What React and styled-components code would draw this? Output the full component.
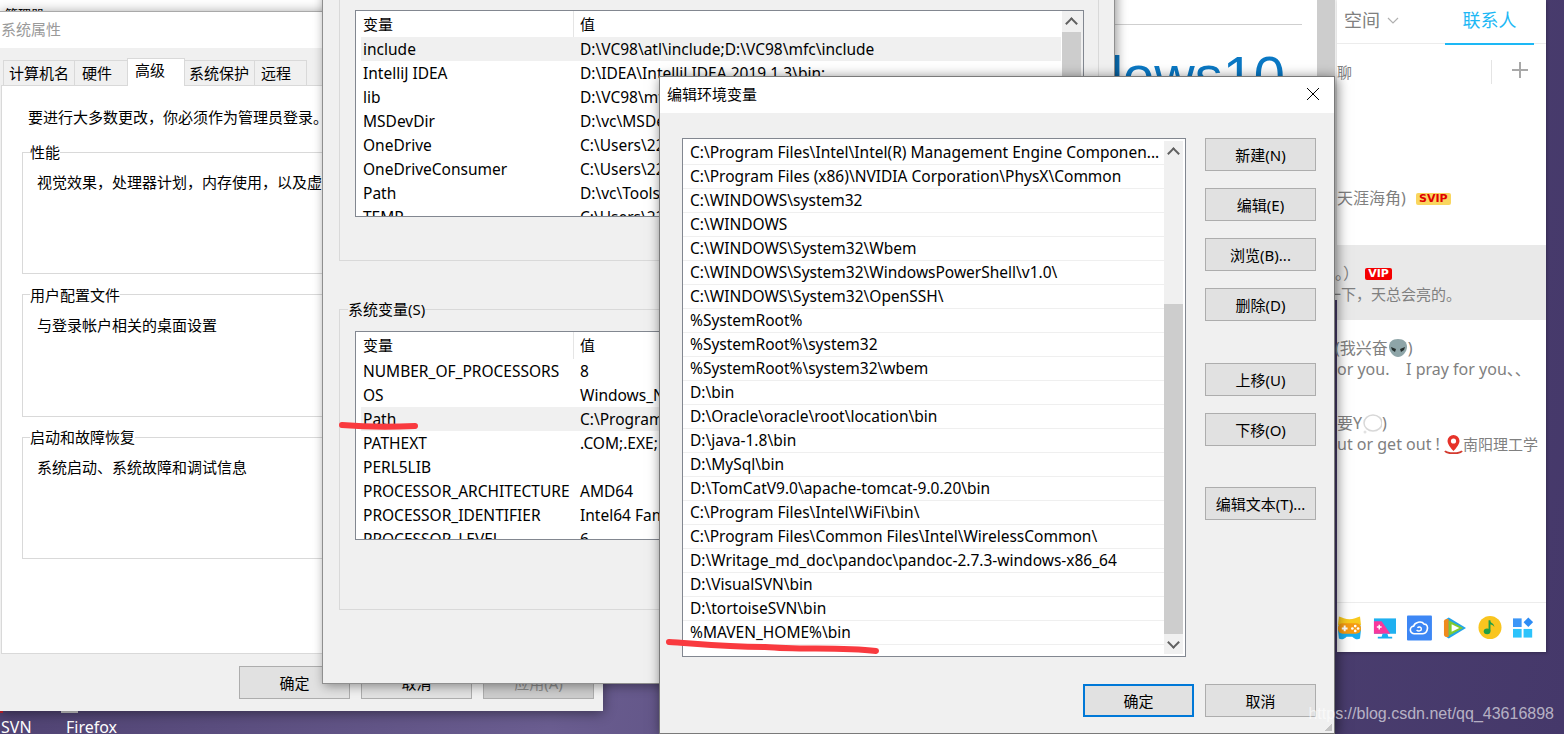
import React from "react";
import styled, { createGlobalStyle } from "styled-components";

const uiFont = `"Noto Sans", "Noto Sans CJK SC", sans-serif`;

const pathRows = [
  "C:\\Program Files\\Intel\\Intel(R) Management Engine Componen...",
  "C:\\Program Files (x86)\\NVIDIA Corporation\\PhysX\\Common",
  "C:\\WINDOWS\\system32",
  "C:\\WINDOWS",
  "C:\\WINDOWS\\System32\\Wbem",
  "C:\\WINDOWS\\System32\\WindowsPowerShell\\v1.0\\",
  "C:\\WINDOWS\\System32\\OpenSSH\\",
  "%SystemRoot%",
  "%SystemRoot%\\system32",
  "%SystemRoot%\\system32\\wbem",
  "D:\\bin",
  "D:\\Oracle\\oracle\\root\\location\\bin",
  "D:\\java-1.8\\bin",
  "D:\\MySql\\bin",
  "D:\\TomCatV9.0\\apache-tomcat-9.0.20\\bin",
  "C:\\Program Files\\Intel\\WiFi\\bin\\",
  "C:\\Program Files\\Common Files\\Intel\\WirelessCommon\\",
  "D:\\Writage_md_doc\\pandoc\\pandoc-2.7.3-windows-x86_64",
  "D:\\VisualSVN\\bin",
  "D:\\tortoiseSVN\\bin",
  "%MAVEN_HOME%\\bin",
  "",
];

const userVars = [
  ["include", "D:\\VC98\\atl\\include;D:\\VC98\\mfc\\include", true],
  ["IntelliJ IDEA", "D:\\IDEA\\IntelliJ IDEA 2019.1.3\\bin;"],
  ["lib", "D:\\VC98\\mfc\\lib"],
  ["MSDevDir", "D:\\vc\\MSDev98"],
  ["OneDrive", "C:\\Users\\22"],
  ["OneDriveConsumer", "C:\\Users\\22"],
  ["Path", "D:\\vc\\Tools"],
  ["TEMP", "C:\\Users\\22"],
];

const sysVars = [
  ["NUMBER_OF_PROCESSORS", "8"],
  ["OS", "Windows_NT"],
  ["Path", "C:\\Program Files", true],
  ["PATHEXT", ".COM;.EXE;"],
  ["PERL5LIB", ""],
  ["PROCESSOR_ARCHITECTURE", "AMD64"],
  ["PROCESSOR_IDENTIFIER", "Intel64 Family"],
  ["PROCESSOR_LEVEL", "6"],
];

const sideButtons = [
  ["新建(N)", 0],
  ["编辑(E)", 17],
  ["浏览(B)...", 17],
  ["删除(D)", 17],
  ["上移(U)", 42],
  ["下移(O)", 17],
  ["编辑文本(T)...", 41],
];

export default function App() {
  return (
    <Desktop>
      <GlobalStyle />

      <BackWindow>
        <ClippedTitle>管理器</ClippedTitle>
        <BackRule />
        <BackHeading>Windows10</BackHeading>
        <BackScroll />
      </BackWindow>

      <DesktopStub $left={61} $color="#cfcfcf" />
      <DesktopStub $left={0} $color="#c8202a" />
      <DesktopLabel $left={1}>SVN</DesktopLabel>
      <DesktopLabel $left={66}>Firefox</DesktopLabel>

      <QQPanel>
        <QQTabs>
          <QQTab>空间<Caret viewBox="0 0 12 8"><path d="M1 1l5 5 5-5" /></Caret></QQTab>
          <QQTab $active>联系人</QQTab>
        </QQTabs>
        <QQSearch>
          <span>聊</span>
          <QQAdd>
            <svg width="18" height="18" viewBox="0 0 18 18"><path d="M9 1v16M1 9h16" stroke="#a8a8a8" strokeWidth="2" /></svg>
          </QQAdd>
        </QQSearch>
        <QQList>
          <QQRow $top={70}>
            <QQName>天涯海角) <Badge $gold>SVIP</Badge></QQName>
          </QQRow>
          <QQRow $active>
            <QQName $shift={-2}>。） <Badge>VIP</Badge></QQName>
            <QQSub $shift={-11}><SubCjk>一下，天总会亮的。</SubCjk></QQSub>
          </QQRow>
          <QQRow>
            <QQName $shift={-2}>(我兴奋<Alien />)</QQName>
            <QQSub>or you. &nbsp;&nbsp; I pray for you、、</QQSub>
          </QQRow>
          <QQRow>
            <QQName>要Y<Bubble />)</QQName>
            <QQSub>ut or get out ! <Pin /><SubCjk>南阳理工学</SubCjk></QQSub>
          </QQRow>
        </QQList>
        <QQFooter>
          <AppIcons />
        </QQFooter>
      </QQPanel>

      <PropsWindow>
        <WinTitle $muted>系统属性</WinTitle>
        <TabBar>
          <TabItem $w={72} $pad={5}>计算机名</TabItem>
          <TabItem $w={54} $pad={7}>硬件</TabItem>
          <TabItem $w={58} $pad={7} $active>高级</TabItem>
          <TabItem $w={71} $pad={4}>系统保护</TabItem>
          <TabItem $w={53} $pad={6}>远程</TabItem>
        </TabBar>
        <TabPanel>
          <AdminNote>要进行大多数更改，你必须作为管理员登录。</AdminNote>
          <Group>
            <legend>性能</legend>
            <p>视觉效果，处理器计划，内存使用，以及虚拟内存</p>
          </Group>
          <Group>
            <legend>用户配置文件</legend>
            <p>与登录帐户相关的桌面设置</p>
          </Group>
          <Group>
            <legend>启动和故障恢复</legend>
            <p>系统启动、系统故障和调试信息</p>
          </Group>
        </TabPanel>
        <PropsFooter>
          <WinButton>确定</WinButton>
          <WinButton>取消</WinButton>
          <WinButton $disabled>应用(A)</WinButton>
        </PropsFooter>
      </PropsWindow>

      <EnvWindow>
        <UserGroup>
          <VarTable $h={207}>
            <VarHead $h={26}><span>变量</span><span>值</span></VarHead>
            {userVars.map(([k, v, on]) => (
              <VarRow key={k} $on={on}><span>{k}</span><span>{v}</span></VarRow>
            ))}
            <VarScroll>
              <ScrollThumb />
              <ArrowUp />
            </VarScroll>
          </VarTable>
        </UserGroup>
        <SysGroup>
          <legend>系统变量(S)</legend>
          <VarTable $h={209}>
            <VarHead $h={27}><span>变量</span><span>值</span></VarHead>
            {sysVars.map(([k, v, on]) => (
              <VarRow key={k} $on={on}><span>{k}</span><span>{v}</span></VarRow>
            ))}
          </VarTable>
        </SysGroup>
      </EnvWindow>

      <EditWindow>
        <WinTitle>
          编辑环境变量
          <CloseIcon viewBox="0 0 14 14"><path d="M1 1l12 12M13 1L1 13" /></CloseIcon>
        </WinTitle>
        <EditBody>
          <PathList>
            <PathRows>
              {pathRows.map((p, i) => <PathRow key={i}>{p}</PathRow>)}
            </PathRows>
            <ListScroll>
              <ArrowUp />
              <ListThumb />
              <ArrowDown />
            </ListScroll>
          </PathList>
          <SideColumn>
            {sideButtons.map(([label, gap]) => (
              <WinButton key={label} $mt={gap}>{label}</WinButton>
            ))}
          </SideColumn>
        </EditBody>
        <EditFooter>
          <WinButton $primary>确定</WinButton>
          <WinButton>取消</WinButton>
        </EditFooter>
        <Grip />
      </EditWindow>

      <Scribble viewBox="0 0 1564 734">
        <path d="M342 425C365 427 395 427 415 426" strokeWidth="6" />
        <path d="M669 642C690 643 720 647 765 647C800 650 840 647 876 651" strokeWidth="6" />
      </Scribble>

      <Watermark>https://blog.csdn.net/qq_43616898</Watermark>
    </Desktop>
  );
}

function Alien() {
  return (
    <svg width="20" height="20" viewBox="0 0 20 20" style={{ verticalAlign: -4 }}>
      <path d="M10 1C4 1 1 4 1 9c0 5 5 10 9 10s9-5 9-10c0-5-3-8-9-8z" fill="#8ea5a8" />
      <path d="M3 9l5 2-1 3-3-2zM17 9l-5 2 1 3 3-2z" fill="#26302f" />
    </svg>
  );
}

function Bubble() {
  return (
    <svg width="20" height="20" viewBox="0 0 20 20" style={{ verticalAlign: -5 }}>
      <ellipse cx="11" cy="9" rx="9" ry="8" fill="#fff" stroke="#d8d8d8" strokeWidth="1.5" />
      <circle cx="3" cy="18" r="1.5" fill="#e2e2e2" />
    </svg>
  );
}

function Pin() {
  return (
    <svg width="19" height="20" viewBox="0 0 19 20" style={{ verticalAlign: -4 }}>
      <path d="M1 17c2 3 15 3 17 0" fill="none" stroke="#d33a2f" strokeWidth="2" />
      <path d="M9.500 1a6 6 0 0 0-6 6c0 4 6 10 6 10s6-6 6-10a6 6 0 0 0-6-6z" fill="#e6332a" />
      <circle cx="9.500" cy="7" r="2.600" fill="#fff" />
    </svg>
  );
}

function AppIcons() {
  return (
    <>
      <svg width="26" height="26" viewBox="0 0 26 26">
        <path d="M2 8h22l1 7-1 9c-3 2-6 0-8-2h-6c-2 2-5 4-8 2l-1-9z" fill="#18aef0" />
        <path d="M2 1c3 1 7 3 11 3s8-2 11-3l1 9H1z" fill="#f8c91e" />
        <rect x="1" y="8" width="24" height="11" rx="5" fill="#f59a12" />
        <path d="M5 13.500h6M8 10.500v6" stroke="#fff" strokeWidth="2" />
        <circle cx="16" cy="13.500" r="1.400" fill="#fff" /><circle cx="19" cy="11" r="1.400" fill="#fff" /><circle cx="19" cy="16" r="1.400" fill="#fff" /><circle cx="22" cy="13.500" r="1.400" fill="#fff" />
      </svg>
      <svg width="24" height="24" viewBox="0 0 24 24">
        <rect x="1" y="2" width="23" height="16" fill="#1fb0f0" />
        <path d="M1 5h8l9 13H1z" fill="#f8389c" />
        <path d="M4 11h5M6.500 8.500v5" stroke="#fff" strokeWidth="1.500" />
        <path d="M10 18h5l1 3h4v2H5v-2h4z" fill="#18aef0" />
      </svg>
      <svg width="26" height="26" viewBox="0 0 26 26">
        <rect width="26" height="26" rx="1" fill="#3d87f5" />
        <path d="M8 19a4 4 0 0 1-1-8c1-4 8-6 11-2 3 0 4 3 3 6-1 3-3 4-5 4z" fill="none" stroke="#fff" strokeWidth="1.700" />
        <path d="M10 15c2 2 5 1 5-1s-3-3-4-1" fill="none" stroke="#fff" strokeWidth="1.500" />
      </svg>
      <svg width="25" height="24" viewBox="0 0 25 24">
        <path d="M3 3l3-2 18 11-18 11-3-2z" fill="#22a4e8" />
        <path d="M1 5c0-2 3-3 5-2v18c-2 1-5 0-5-2z" fill="#f08a1d" />
        <path d="M6 4l15 8L6 20z" fill="#7fca2f" />
        <path d="M9 8l8 4-8 4z" fill="#fff" />
      </svg>
      <svg width="25" height="25" viewBox="0 0 25 25">
        <circle cx="12.500" cy="12.500" r="12" fill="#f9c51f" />
        <path d="M12 5v11" stroke="#1e9e4a" strokeWidth="2" />
        <ellipse cx="9.500" cy="16.500" rx="3.500" ry="3" fill="#1e9e4a" />
        <path d="M12 5c1 3 5 3 5 7-1-2-3-3-5-3z" fill="#1e9e4a" />
      </svg>
      <svg width="21" height="21" viewBox="0 0 21 21">
        <rect x="0" y="1" width="9" height="9" fill="#3c96f7" />
        <path d="M16 0l5 5-5 5-5-5z" fill="#2d8cf5" />
        <rect x="0" y="12" width="9" height="9" fill="#2cc3fb" />
        <rect x="11" y="12" width="9" height="9" fill="#2cc3fb" />
      </svg>
    </>
  );
}

const GlobalStyle = createGlobalStyle`
  html, body { margin: 0; padding: 0; overflow: hidden; }
  body { font-family: ${uiFont}; font-size: 15px; color: #000; }
`;

const Desktop = styled.div`
  position: relative;
  width: 1564px;
  height: 734px;
  overflow: hidden;
  background: linear-gradient(100deg, #4a3d6c 0%, #6a5d90 40%, #4e4272 70%, #45386a 100%);
`;

const BackWindow = styled.div`
  position: absolute;
  left: 0;
  top: 0;
  width: 1337px;
  height: 300px;
  background: #fff;
  border-right: 2px solid #f0f0f0;
  box-sizing: border-box;
  overflow: hidden;
`;

const ClippedTitle = styled.div`
  position: absolute;
  left: 5px;
  top: 6px;
  font-size: 13px;
  line-height: 16px;
`;

const BackRule = styled.div`
  position: absolute;
  left: 1115px;
  top: 24px;
  width: 187px;
  height: 1px;
  background: #cfcfcf;
`;

const BackHeading = styled.div`
  position: absolute;
  right: 50px;
  top: 48px;
  font-family: "Liberation Sans", sans-serif;
  font-size: 56px;
  line-height: 56px;
  color: #0a78c4;
`;

const BackScroll = styled.div`
  position: absolute;
  left: 1317px;
  top: 0;
  width: 18px;
  height: 100%;
  background: #cdcdcd;
`;

const DesktopStub = styled.div`
  position: absolute;
  left: ${(p) => p.$left}px;
  top: 700px;
  width: ${(p) => (p.$left ? 17 : 3)}px;
  height: 13px;
  background: ${(p) => p.$color};
`;

const DesktopLabel = styled.div`
  position: absolute;
  left: ${(p) => p.$left}px;
  top: 717px;
  color: #fff;
  font-size: 16px;
  line-height: 20px;
`;

const QQPanel = styled.div`
  position: absolute;
  left: 1337px;
  top: 0;
  width: 209px;
  height: 652px;
  background: #fff;
  display: flex;
  flex-direction: column;
  box-shadow: 1px 1px 3px rgba(0, 0, 0, 0.25);
  z-index: 1;
`;

const QQTabs = styled.div`
  height: 44px;
  flex: none;
  box-sizing: border-box;
  border-bottom: 1px solid #ececec;
  display: flex;
  justify-content: space-between;
  padding: 0 12px 0 7px;
`;

const QQTab = styled.div`
  width: ${(p) => (p.$active ? "89px" : "auto")};
  text-align: center;
  font-size: 18px;
  line-height: 41px;
  height: 45px;
  box-sizing: border-box;
  white-space: nowrap;
  color: ${(p) => (p.$active ? "#1db8f5" : "#808080")};
  border-bottom: ${(p) => (p.$active ? "2px solid #1db8f5" : "none")};
`;

const Caret = styled.svg`
  width: 12px;
  height: 8px;
  margin-left: 7px;
  vertical-align: 2px;
  fill: none;
  stroke: #b0b0b0;
  stroke-width: 1.2;
`;

const QQSearch = styled.div`
  height: 56px;
  flex: none;
  padding: 16px 0 0 0;
  box-sizing: border-box;
  font-size: 15px;
  line-height: 24px;
  color: #808080;
  display: flex;
  justify-content: space-between;
`;

const QQAdd = styled.div`
  width: 55px;
  height: 24px;
  box-sizing: border-box;
  border-left: 1px solid #e4e4e4;
  padding: 1px 0 0 19px;
`;

const QQList = styled.div`
  flex: 1;
  display: flex;
  flex-direction: column;
`;

const QQRow = styled.div`
  margin-top: ${(p) => p.$top || 0}px;
  height: 75px;
  box-sizing: border-box;
  padding: 16px 0 0 0;
  background: ${(p) => (p.$active ? "#e9e9e9" : "transparent")};
  color: #808080;
  white-space: nowrap;
`;

const QQName = styled.div`
  height: 24px;
  line-height: 24px;
  font-size: 16px;
  margin-left: ${(p) => p.$shift || 0}px;
`;

const QQSub = styled.div`
  height: 20px;
  margin-top: -1px;
  line-height: 20px;
  font-size: 16px;
  margin-left: ${(p) => p.$shift || 0}px;
`;

const SubCjk = styled.span`
  font-size: 15px;
`;

const Badge = styled.span`
  display: inline-block;
  vertical-align: 2px;
  margin-left: ${(p) => (p.$gold ? 6 : 2)}px;
  padding: 0 3px;
  height: 12px;
  line-height: 12px;
  border-radius: 2px;
  font-family: "DejaVu Sans", sans-serif;
  font-size: 11px;
  font-weight: 700;
  background: ${(p) => (p.$gold ? "#f9d65f" : "#f40000")};
  color: ${(p) => (p.$gold ? "#e00000" : "#fff")};
`;

const QQFooter = styled.div`
  height: 50px;
  flex: none;
  box-sizing: border-box;
  border-top: 1px solid #ececec;
  display: flex;
  align-items: center;
  justify-content: flex-end;
  gap: 11px;
  padding-right: 13px;
`;

const PropsWindow = styled.div`
  position: absolute;
  left: 0;
  top: 11px;
  width: 603px;
  height: 700px;
  background: #f0f0f0;
  border-top: 1px solid #a9a9a9;
  box-sizing: border-box;
  display: flex;
  flex-direction: column;
  box-shadow: 0 2px 12px rgba(0, 0, 0, 0.45);
  z-index: 2;
`;

const WinTitle = styled.div`
  height: 36px;
  flex: none;
  background: #fff;
  display: flex;
  align-items: center;
  justify-content: space-between;
  padding: 0 14px 3px ${(p) => (p.$muted ? "1px" : "7px")};
  box-sizing: border-box;
  color: ${(p) => (p.$muted ? "#9a9a9a" : "#000")};
`;

const TabBar = styled.div`
  display: flex;
  align-items: flex-end;
  height: 37px;
  flex: none;
  padding-left: 4px;
`;

const TabItem = styled.div`
  width: ${(p) => p.$w}px;
  height: ${(p) => (p.$active ? 28 : 25)}px;
  box-sizing: border-box;
  border: 1px solid #d9d9d9;
  border-bottom: none;
  margin-left: -1px;
  padding-left: ${(p) => p.$pad}px;
  background: ${(p) => (p.$active ? "#fff" : "#f0f0f0")};
  line-height: ${(p) => (p.$active ? "23px" : "25px")};
  white-space: nowrap;
  position: relative;
  z-index: ${(p) => (p.$active ? 1 : 0)};
  margin-bottom: ${(p) => (p.$active ? "-1px" : "0")};
`;

const TabPanel = styled.div`
  height: 569px;
  flex: none;
  margin: 0 9px 0 1px;
  background: #fff;
  border: 1px solid #d9d9d9;
  box-sizing: border-box;
  padding: 19px 0 0 20px;
`;

const AdminNote = styled.div`
  padding-left: 6px;
  height: 24px;
  line-height: 24px;
  margin-bottom: 13px;
`;

const Group = styled.fieldset`
  margin: 0 18px 10.5px 0;
  padding: 10px 0 0 14px;
  height: 132px;
  box-sizing: border-box;
  border: 1px solid #d9d9d9;
  legend {
    padding: 0;
    margin-left: -7px;
    line-height: 20px;
  }
  p {
    margin: 0;
    line-height: 20px;
  }
`;

const PropsFooter = styled.div`
  display: flex;
  justify-content: flex-end;
  gap: 11px;
  padding: 12px 9px 0 0;
`;

const WinButton = styled.div`
  width: 111px;
  height: 33px;
  flex: none;
  margin-top: ${(p) => p.$mt || 0}px;
  box-sizing: border-box;
  border: ${(p) => (p.$primary ? "2px solid #0078d7" : "1px solid #adadad")};
  color: ${(p) => (p.$disabled ? "#8a8a8a" : "#000")};
  background: ${(p) => (p.$disabled ? "#cccccc" : "#e1e1e1")};
  display: flex;
  align-items: center;
  justify-content: center;
  white-space: nowrap;
`;

const EnvWindow = styled.div`
  position: absolute;
  left: 322px;
  top: -20px;
  width: 793px;
  height: 704px;
  background: #f0f0f0;
  border: 1px solid #8f8f8f;
  border-top: none;
  box-sizing: border-box;
  padding-left: 16px;
  box-shadow: 2px 2px 10px rgba(0, 0, 0, 0.4);
  z-index: 3;
`;

const VarTable = styled.div`
  position: relative;
  width: 729px;
  height: ${(p) => p.$h}px;
  box-sizing: border-box;
  background: #fff;
  border: 1px solid #828790;
  padding: 0 0 0 5px;
  overflow: hidden;
  font-size: 15.5px;
`;

const UserGroup = styled.div`
  width: 760px;
  height: 281px;
  box-sizing: border-box;
  border: 1px solid #d9d9d9;
  border-top: none;
  padding: 30px 0 0 15px;
`;

const VarHead = styled.div`
  display: grid;
  grid-template-columns: 212px 1fr;
  height: ${(p) => p.$h}px;
  line-height: ${(p) => p.$h}px;
  font-size: 15px;
  span { padding-left: 2px; }
  span + span { border-left: 1px solid #e5e5e5; padding-left: 6px; }
`;

const VarRow = styled.div`
  display: grid;
  grid-template-columns: 219px 1fr;
  height: 24px;
  line-height: 24px;
  width: 700px;
  background: ${(p) => (p.$on ? "#f0f0f0" : "transparent")};
  white-space: nowrap;
  overflow: hidden;
  span:first-child { padding-left: 2px; }
`;

const VarScroll = styled.div`
  position: absolute;
  right: 0;
  top: 0;
  width: 21px;
  height: 100%;
  background: #f0f0f0;
`;

const ScrollThumb = styled.div`
  position: absolute;
  left: 0;
  top: 21px;
  width: 19px;
  height: 60px;
  background: #cdcdcd;
`;

const SysGroup = styled.fieldset`
  margin: 38px 0 0 0;
  padding: 12px 0 0 15px;
  height: 311px;
  width: 760px;
  box-sizing: border-box;
  border: 1px solid #d9d9d9;
  legend {
    margin-left: -7px;
    padding: 0;
    line-height: 20px;
  }
`;

const EditWindow = styled.div`
  position: absolute;
  left: 659px;
  top: 76px;
  width: 676px;
  height: 658px;
  background: #f0f0f0;
  border: 1px solid #7a7a7a;
  box-sizing: border-box;
  display: flex;
  flex-direction: column;
  box-shadow: 2px 2px 12px rgba(0, 0, 0, 0.55);
  z-index: 4;
`;

const CloseIcon = styled.svg`
  width: 14px;
  height: 14px;
  fill: none;
  stroke: #000;
  stroke-width: 1;
`;

const EditBody = styled.div`
  display: flex;
  gap: 19px;
  padding: 25px 0 0 22px;
`;

const PathList = styled.div`
  width: 504px;
  height: 519px;
  box-sizing: border-box;
  background: #fff;
  border: 1px solid #828790;
  display: flex;
  padding: 2px 2px 2px 0;
  overflow: hidden;
  font-size: 15.5px;
`;

const PathRows = styled.div`
  flex: 1;
`;

const PathRow = styled.div`
  height: 24px;
  box-sizing: border-box;
  line-height: 22px;
  padding-left: 7px;
  border-bottom: 1px solid #efefef;
  white-space: nowrap;
  overflow: hidden;
`;

const ListScroll = styled.div`
  position: relative;
  width: 19px;
  background: #f0f0f0;
  display: flex;
  flex-direction: column;
`;

const ArrowUp = styled.div`
  position: absolute;
  top: 8px;
  left: 5px;
  width: 7px;
  height: 7px;
  border-left: 2px solid #606060;
  border-top: 2px solid #606060;
  transform: rotate(45deg);
`;

const ArrowDown = styled(ArrowUp)`
  top: auto;
  bottom: 7px;
  transform: rotate(225deg);
`;

const ListThumb = styled.div`
  position: absolute;
  top: 163px;
  bottom: 20px;
  left: 0;
  right: 0;
  background: #cdcdcd;
`;

const SideColumn = styled.div`
  display: flex;
  flex-direction: column;
`;

const EditFooter = styled.div`
  display: flex;
  justify-content: flex-end;
  gap: 11px;
  padding: 27px 18px 0 0;
`;

const Grip = styled.div`
  position: absolute;
  right: 2px;
  bottom: 2px;
  width: 7px;
  height: 7px;
  background: linear-gradient(135deg, transparent 50%, #c4c4c4 50%);
`;

const Scribble = styled.svg`
  position: absolute;
  left: 0;
  top: 0;
  width: 1564px;
  height: 734px;
  fill: none;
  stroke: #f93a3f;
  stroke-linecap: round;
  pointer-events: none;
  z-index: 5;
`;

const Watermark = styled.div`
  position: absolute;
  right: 10px;
  top: 704px;
  font-family: "Liberation Sans", sans-serif;
  font-size: 16px;
  line-height: 20px;
  color: rgba(255, 255, 255, 0.62);
  z-index: 6;
`;
